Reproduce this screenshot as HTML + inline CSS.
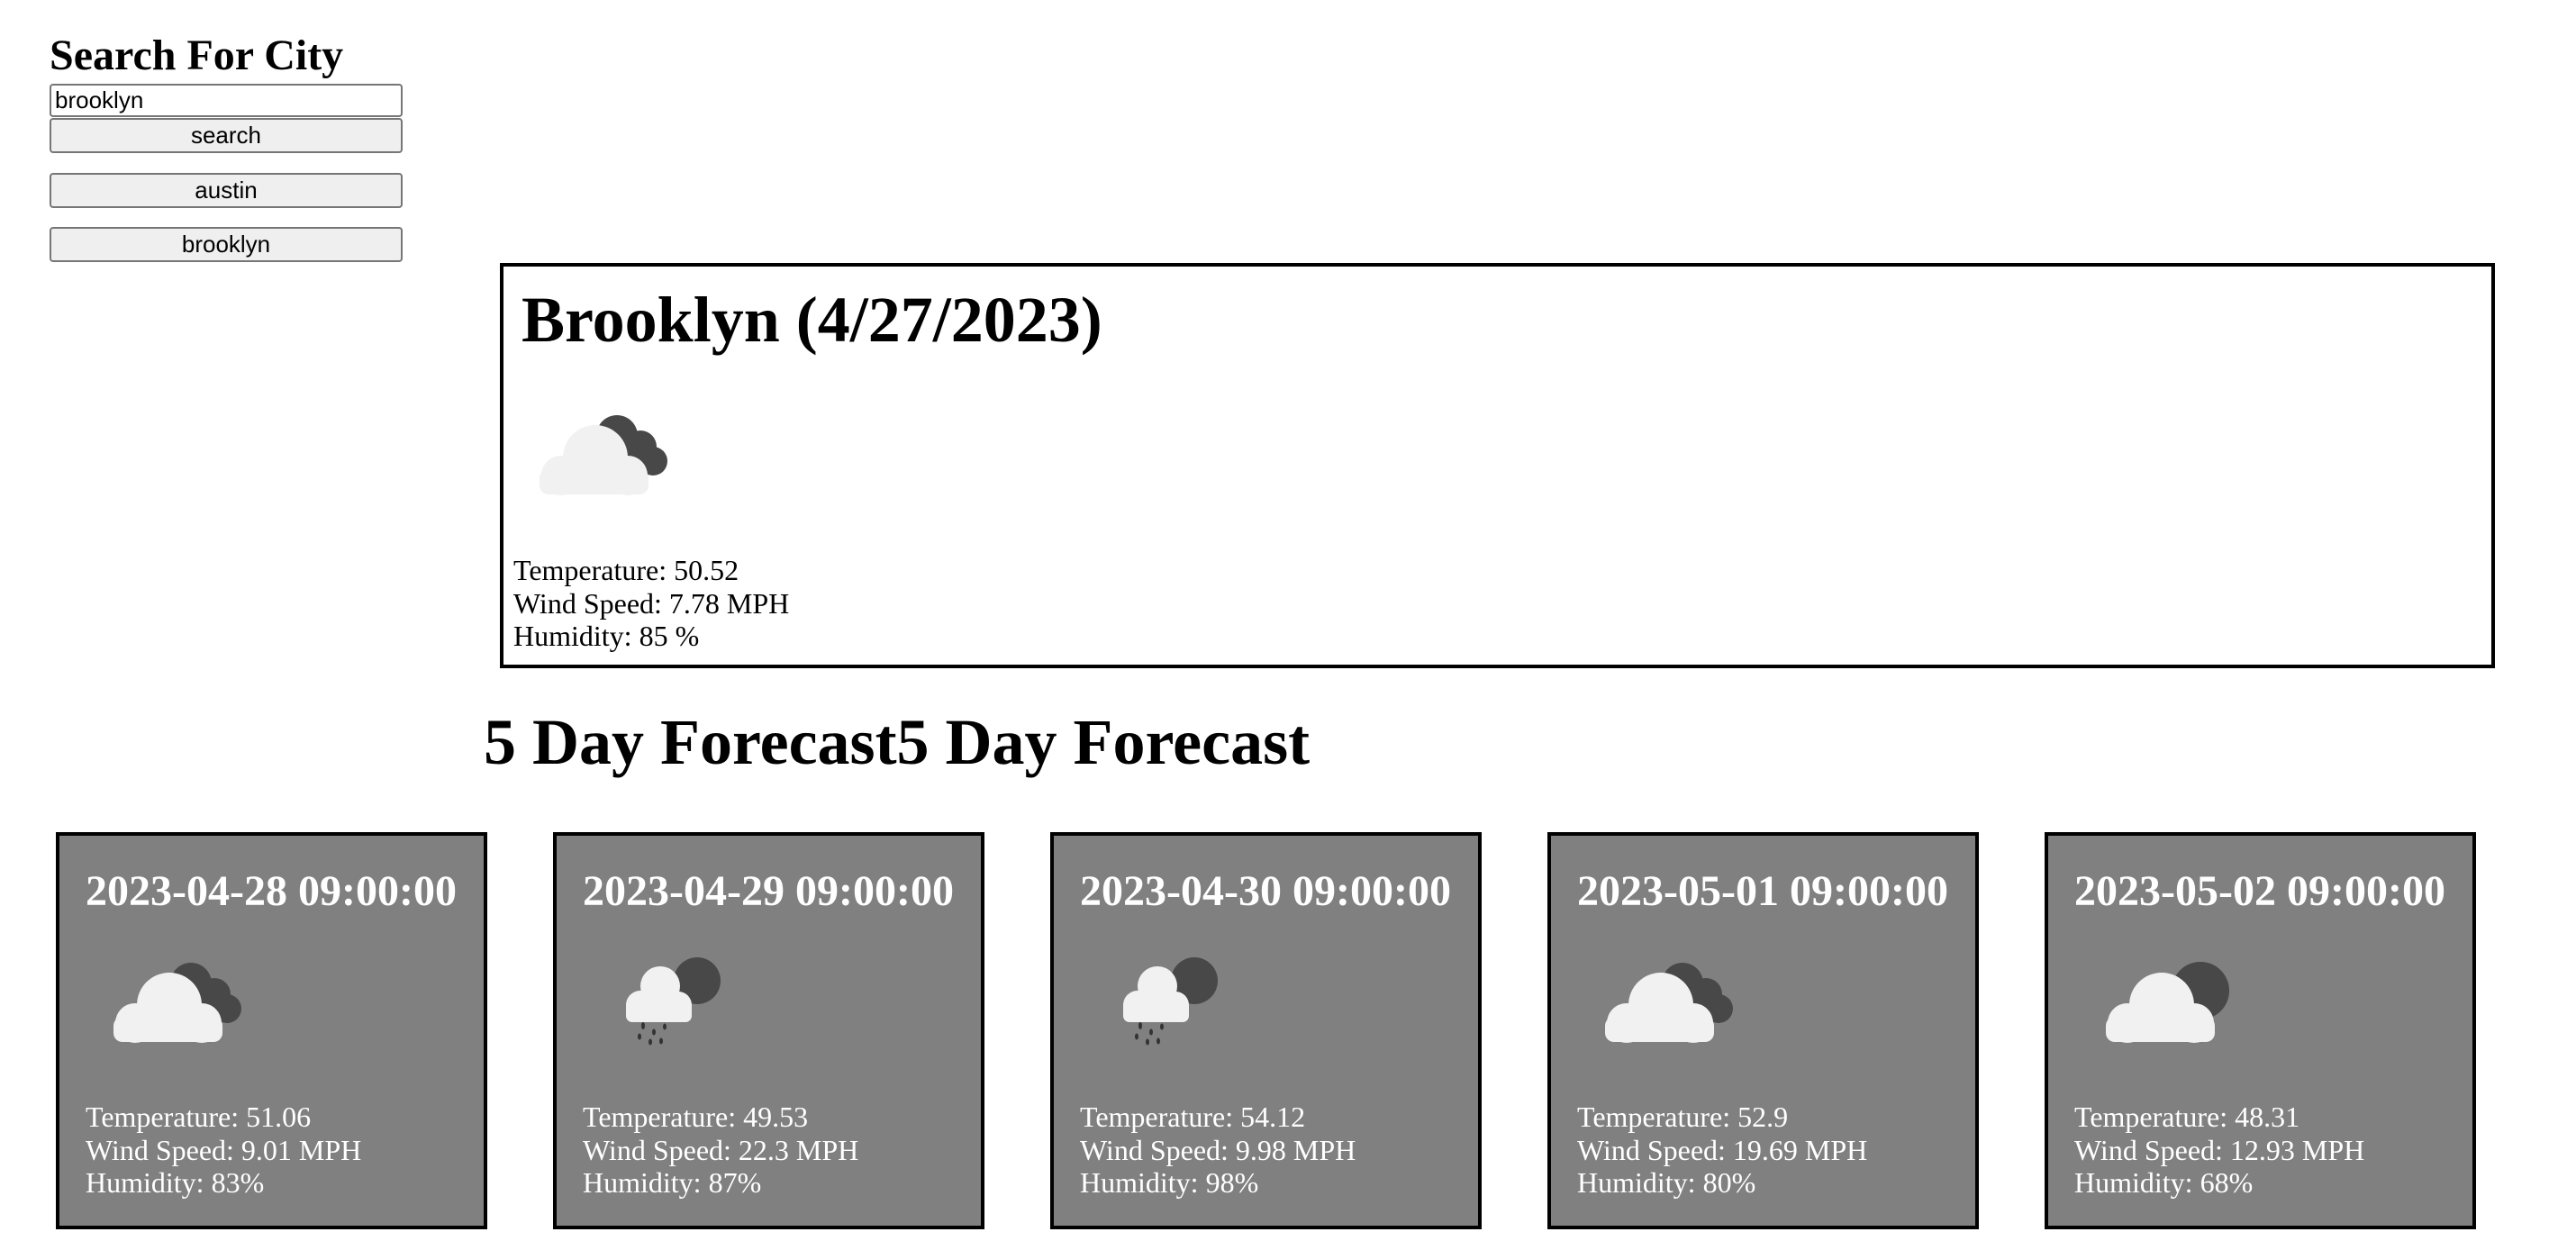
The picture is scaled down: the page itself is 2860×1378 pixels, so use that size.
<!DOCTYPE html>
<html><head><meta charset="utf-8"><style>
*{margin:0;padding:0;box-sizing:border-box}
html,body{width:2860px;height:1378px;overflow:hidden;background:#fff;position:relative;font-family:"Liberation Serif",serif;color:#000}
.a{position:absolute}
h2.s{position:absolute;left:55px;top:35px;font-size:48px;font-weight:bold;line-height:54px;white-space:nowrap}
.inp{position:absolute;left:55px;top:93px;width:392px;height:37px;border:2px solid #767676;border-radius:4px;font-family:"Liberation Sans",sans-serif;font-size:26px;line-height:33px;padding-left:4px;background:#fff}
.btn{position:absolute;left:55px;width:392px;height:39px;border:2px solid #767676;border-radius:4px;background:#efefef;font-family:"Liberation Sans",sans-serif;font-size:26px;line-height:35px;text-align:center}
.box{position:absolute;left:555px;top:292px;width:2215px;height:450px;border:4px solid #000}
.box h1{position:absolute;left:20px;top:19px;font-size:72px;font-weight:bold;line-height:80px;white-space:nowrap}
.t{position:absolute;font-size:32px;line-height:36.6px;white-space:nowrap}
.fh{position:absolute;left:537px;top:784px;font-size:72px;font-weight:bold;line-height:80px;white-space:nowrap}
.card{position:absolute;top:924px;width:479px;height:441px;border:4px solid #000;background:#808080;color:#fff}
.card h2{position:absolute;left:29px;top:32px;font-size:48px;font-weight:bold;line-height:60px;white-space:nowrap}
.card svg{position:absolute;left:-4px;top:-4px}
.card .t{left:29px;top:294px}
</style></head><body>
<h2 class="s">Search For City</h2>
<div class="inp">brooklyn</div>
<div class="btn" style="top:131px">search</div>
<div class="btn" style="top:192px">austin</div>
<div class="btn" style="top:252px">brooklyn</div>

<div class="box">
<h1>Brooklyn (4/27/2023)</h1>
<svg class="a" style="left:-4px;top:-4px" width="300" height="300" viewBox="0 0 300 300">
<g transform="translate(-20,24)">
<g fill="#484848"><circle cx="150" cy="168" r="23"/><circle cx="176" cy="180" r="18"/><circle cx="190" cy="196" r="16"/><rect x="140" y="180" width="50" height="31" rx="10"/></g>
<g fill="#f1f1f1"><circle cx="88" cy="212" r="22"/><circle cx="126" cy="192" r="36"/><circle cx="162" cy="212" r="22"/><rect x="64" y="205" width="121" height="28" rx="10"/></g>
</g></svg>
<div class="t" style="left:11px;top:319px">Temperature: 50.52<br>Wind Speed: 7.78 MPH<br>Humidity: 85 %</div>
</div>

<div class="fh">5 Day Forecast5 Day Forecast</div>

<div class="card" style="left:62px">
<h2>2023-04-28 09:00:00</h2>
<svg width="481" height="441" viewBox="0 0 481 441">
<g fill="#484848"><circle cx="150" cy="168" r="23"/><circle cx="176" cy="180" r="18"/><circle cx="190" cy="196" r="16"/><rect x="140" y="180" width="50" height="31" rx="10"/></g>
<g fill="#f1f1f1"><circle cx="88" cy="212" r="22"/><circle cx="126" cy="192" r="36"/><circle cx="162" cy="212" r="22"/><rect x="64" y="205" width="121" height="28" rx="10"/></g>
</svg>
<div class="t">Temperature: 51.06<br>Wind Speed: 9.01 MPH<br>Humidity: 83%</div>
</div>

<div class="card" style="left:614px">
<h2>2023-04-29 09:00:00</h2>
<svg width="481" height="441" viewBox="0 0 481 441">
<circle cx="160" cy="165" r="26" fill="#484848"/>
<g fill="#f1f1f1"><circle cx="97" cy="192" r="16"/><circle cx="119" cy="171" r="22"/><circle cx="139" cy="192" r="15"/><rect x="81" y="186" width="73" height="25" rx="7"/></g>
<g fill="#333"><ellipse cx="100" cy="215" rx="2" ry="4"/><ellipse cx="96" cy="227" rx="2" ry="3.5"/><ellipse cx="112" cy="222" rx="2" ry="3.5"/><ellipse cx="108" cy="233" rx="2" ry="3.5"/><ellipse cx="124" cy="216" rx="2" ry="3.5"/><ellipse cx="120" cy="232" rx="2" ry="3.5"/></g>
</svg>
<div class="t">Temperature: 49.53<br>Wind Speed: 22.3 MPH<br>Humidity: 87%</div>
</div>

<div class="card" style="left:1166px">
<h2>2023-04-30 09:00:00</h2>
<svg width="481" height="441" viewBox="0 0 481 441">
<circle cx="160" cy="165" r="26" fill="#484848"/>
<g fill="#f1f1f1"><circle cx="97" cy="192" r="16"/><circle cx="119" cy="171" r="22"/><circle cx="139" cy="192" r="15"/><rect x="81" y="186" width="73" height="25" rx="7"/></g>
<g fill="#333"><ellipse cx="100" cy="215" rx="2" ry="4"/><ellipse cx="96" cy="227" rx="2" ry="3.5"/><ellipse cx="112" cy="222" rx="2" ry="3.5"/><ellipse cx="108" cy="233" rx="2" ry="3.5"/><ellipse cx="124" cy="216" rx="2" ry="3.5"/><ellipse cx="120" cy="232" rx="2" ry="3.5"/></g>
</svg>
<div class="t">Temperature: 54.12<br>Wind Speed: 9.98 MPH<br>Humidity: 98%</div>
</div>

<div class="card" style="left:1718px">
<h2>2023-05-01 09:00:00</h2>
<svg width="481" height="441" viewBox="0 0 481 441">
<g fill="#484848"><circle cx="150" cy="168" r="23"/><circle cx="176" cy="180" r="18"/><circle cx="190" cy="196" r="16"/><rect x="140" y="180" width="50" height="31" rx="10"/></g>
<g fill="#f1f1f1"><circle cx="88" cy="212" r="22"/><circle cx="126" cy="192" r="36"/><circle cx="162" cy="212" r="22"/><rect x="64" y="205" width="121" height="28" rx="10"/></g>
</svg>
<div class="t">Temperature: 52.9<br>Wind Speed: 19.69 MPH<br>Humidity: 80%</div>
</div>

<div class="card" style="left:2270px">
<h2>2023-05-02 09:00:00</h2>
<svg width="481" height="441" viewBox="0 0 481 441">
<circle cx="173" cy="176" r="32" fill="#484848"/>
<g fill="#f1f1f1" transform="translate(4,0)"><circle cx="88" cy="212" r="22"/><circle cx="126" cy="192" r="36"/><circle cx="162" cy="212" r="22"/><rect x="64" y="205" width="121" height="28" rx="10"/></g>
</svg>
<div class="t">Temperature: 48.31<br>Wind Speed: 12.93 MPH<br>Humidity: 68%</div>
</div>
</body></html>
